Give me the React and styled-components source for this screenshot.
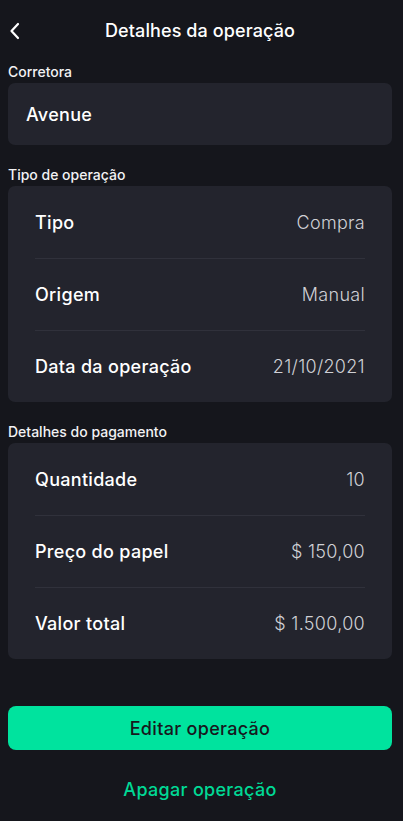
import styled, { createGlobalStyle } from "styled-components";

const GlobalStyle = createGlobalStyle`
  html, body {
    margin: 0;
    padding: 0;
    background: #15161c;
  }
  * { box-sizing: border-box; }
`;

const Page = styled.div`
  min-height: 821px;
  background: #15161c;
  color: #ffffff;
  font-family: "Inter", "Liberation Sans", sans-serif;
  padding: 0 11px 0 8px;
  display: flex;
  flex-direction: column;
`;

const Header = styled.div`
  height: 61px;
  display: flex;
  align-items: center;
  justify-content: center;
  position: relative;
`;

const BackButton = styled.button`
  position: absolute;
  left: 0;
  top: 0;
  bottom: 0;
  padding: 0;
  border: none;
  background: none;
  color: #fff;
  display: flex;
  align-items: center;
`;

const Title = styled.h1`
  margin: 0;
  font-size: 18px;
  font-weight: 500;
  letter-spacing: 0.1px;
`;

const SectionLabel = styled.div`
  font-size: 14px;
  font-weight: 500;
  color: #f2f2f4;
  height: 22px;
  line-height: 22px;
`;

const Card = styled.div`
  background: #23242d;
  border-radius: 7px;
  padding: 0 27px;
  margin-bottom: 19px;
`;

const SingleCard = styled(Card)`
  height: 62px;
  padding: 0 18px;
  display: flex;
  align-items: center;
  font-size: 18px;
  font-weight: 500;
  letter-spacing: 0.3px;
`;

const Row = styled.div`
  height: 72px;
  display: flex;
  align-items: center;
  justify-content: space-between;
  & + & {
    border-top: 1px solid #30313b;
  }
`;

const RowLabel = styled.span`
  font-size: 18px;
  font-weight: 500;
  letter-spacing: 0.3px;
  color: #ffffff;
`;

const RowValue = styled.span`
  font-size: 18px;
  font-weight: 300;
  letter-spacing: 0.3px;
  color: #cfd0d5;
`;

const PrimaryButton = styled.button`
  margin-top: 28px;
  height: 44px;
  border: none;
  border-radius: 8px;
  background: #00e39e;
  color: #17181d;
  font-family: inherit;
  font-size: 18px;
  font-weight: 500;
  letter-spacing: 0.3px;
`;

const LinkButton = styled.button`
  margin-top: 29px;
  border: none;
  background: none;
  color: #00d995;
  font-family: inherit;
  font-size: 18px;
  font-weight: 500;
  letter-spacing: 0.3px;
  line-height: 22px;
  padding: 0;
`;

const operation = [
  ["Tipo", "Compra"],
  ["Origem", "Manual"],
  ["Data da operação", "21/10/2021"],
];

const payment = [
  ["Quantidade", "10"],
  ["Preço do papel", "$ 150,00"],
  ["Valor total", "$ 1.500,00"],
];

const DetailCard = ({ rows }) => (
  <Card>
    {rows.map(([label, value]) => (
      <Row key={label}>
        <RowLabel>{label}</RowLabel>
        <RowValue>{value}</RowValue>
      </Row>
    ))}
  </Card>
);

export default function App() {
  return (
    <>
      <GlobalStyle />
      <Page>
        <Header>
          <BackButton aria-label="Voltar">
            <svg width="12" height="18" viewBox="0 0 12 18" fill="none">
              <path d="M10 2L3.5 9l6.5 7" stroke="#fff" strokeWidth="2.2" strokeLinecap="round" strokeLinejoin="round" />
            </svg>
          </BackButton>
          <Title>Detalhes da operação</Title>
        </Header>
        <SectionLabel>Corretora</SectionLabel>
        <SingleCard>Avenue</SingleCard>
        <SectionLabel>Tipo de operação</SectionLabel>
        <DetailCard rows={operation} />
        <SectionLabel>Detalhes do pagamento</SectionLabel>
        <DetailCard rows={payment} />
        <PrimaryButton>Editar operação</PrimaryButton>
        <LinkButton>Apagar operação</LinkButton>
      </Page>
    </>
  );
}
